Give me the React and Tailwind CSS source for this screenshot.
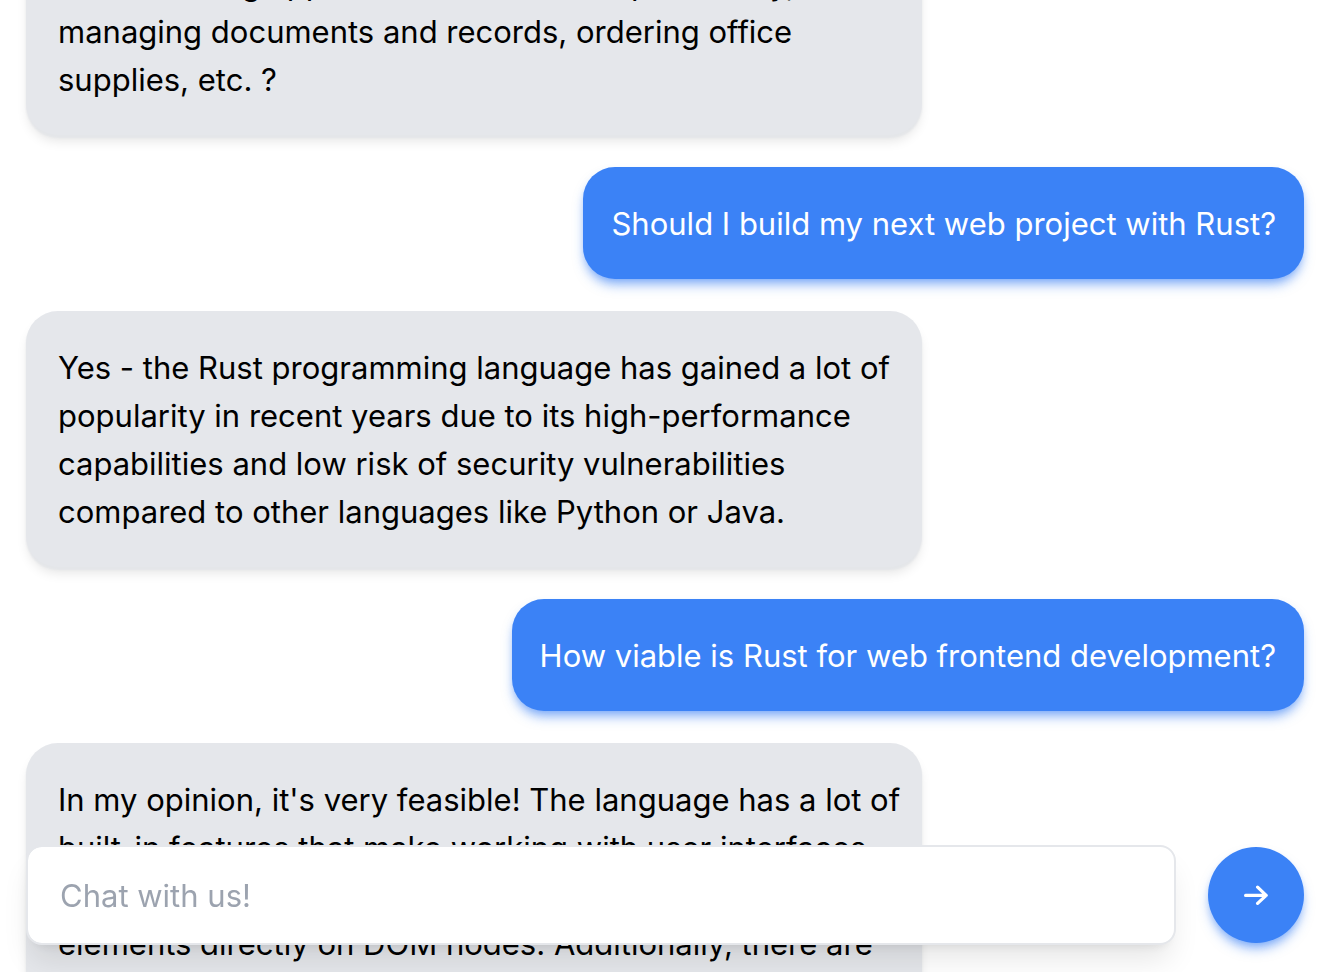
import { useLayoutEffect, useRef } from "react";

const INITIAL_SCROLL = 121;

const messages = [
  {
    from: "bot",
    text: "Would you like assistance with general office work such as scheduling appointments and travel plans daily, managing documents and records, ordering office supplies, etc. ?",
  },
  { from: "user", text: "Should I build my next web project with Rust?" },
  {
    from: "bot",
    text: "Yes - the Rust programming language has gained a lot of popularity in recent years due to its high-performance capabilities and low risk of security vulnerabilities compared to other languages like Python or Java.",
  },
  { from: "user", text: "How viable is Rust for web frontend development?" },
  {
    from: "bot",
    text: "In my opinion, it's very feasible! The language has a lot of built-in features that make working with user interfaces much easier, and lets you attach listeners and update elements directly on DOM nodes. Additionally, there are many frameworks to choose from.",
  },
];

function Message({ from, text }) {
  if (from === "user") {
    return (
      <li className="max-w-4xl self-end rounded-[32px] bg-[#3b82f6] px-7 pt-[33px] pb-[31px] text-white shadow-[0_8px_12px_-2px_rgba(59,130,246,0.5),0_4px_8px_-4px_rgba(59,130,246,0.5)]">
        {text}
      </li>
    );
  }
  return (
    <li className="w-full max-w-4xl self-start rounded-[32px] bg-[#e5e7eb] pt-[33px] pr-4 pb-[31px] pl-8 text-black shadow-[0_3px_2px_0_#e4e6e9,0_8px_12px_-2px_rgba(0,0,0,0.1)]">
      {text}
    </li>
  );
}

function SendIcon() {
  return (
    <svg
      className="h-5 w-6"
      viewBox="0 0 24 20"
      fill="none"
      stroke="currentColor"
      strokeWidth="3.2"
      strokeLinecap="round"
      strokeLinejoin="round"
      aria-hidden="true"
    >
      <path d="M1.6 10.4H22M13.6 2.2L22.2 10.4L13.6 18.4" />
    </svg>
  );
}

export default function App() {
  const scroller = useRef(null);

  useLayoutEffect(() => {
    scroller.current.scrollTop = INITIAL_SCROLL;
  }, []);

  return (
    <div className="h-screen bg-white font-['Inter','Liberation_Sans',sans-serif] text-[31px] leading-[48px]">
      <main ref={scroller} className="h-full overflow-y-auto [scrollbar-width:none]">
        <ul className="flex flex-col gap-8 pr-[30px] pb-40 pl-[26px]">
          {messages.map((message) => (
            <Message key={message.text} {...message} />
          ))}
        </ul>
      </main>
      <form
        className="fixed inset-x-0 bottom-0 flex items-center gap-8 pr-[30px] pb-[27px] pl-[26px]"
        onSubmit={(event) => event.preventDefault()}
      >
        <input
          type="text"
          aria-label="Message"
          placeholder="Chat with us!"
          className="min-w-0 flex-1 rounded-2xl border-2 border-[#e5e7eb] bg-white bg-clip-padding px-8 pt-[25px] pb-[23px] text-black shadow-[0_20px_30px_-6px_rgba(0,0,0,0.1),0_8px_12px_-8px_rgba(0,0,0,0.1)] outline-none placeholder:text-[#9ca3af]"
        />
        <button
          type="submit"
          aria-label="Send"
          className="flex size-24 shrink-0 items-center justify-center rounded-full bg-[#3b82f6] text-white shadow-[0_8px_12px_-2px_rgba(59,130,246,0.5),0_4px_8px_-4px_rgba(59,130,246,0.5)]"
        >
          <SendIcon />
        </button>
      </form>
    </div>
  );
}
